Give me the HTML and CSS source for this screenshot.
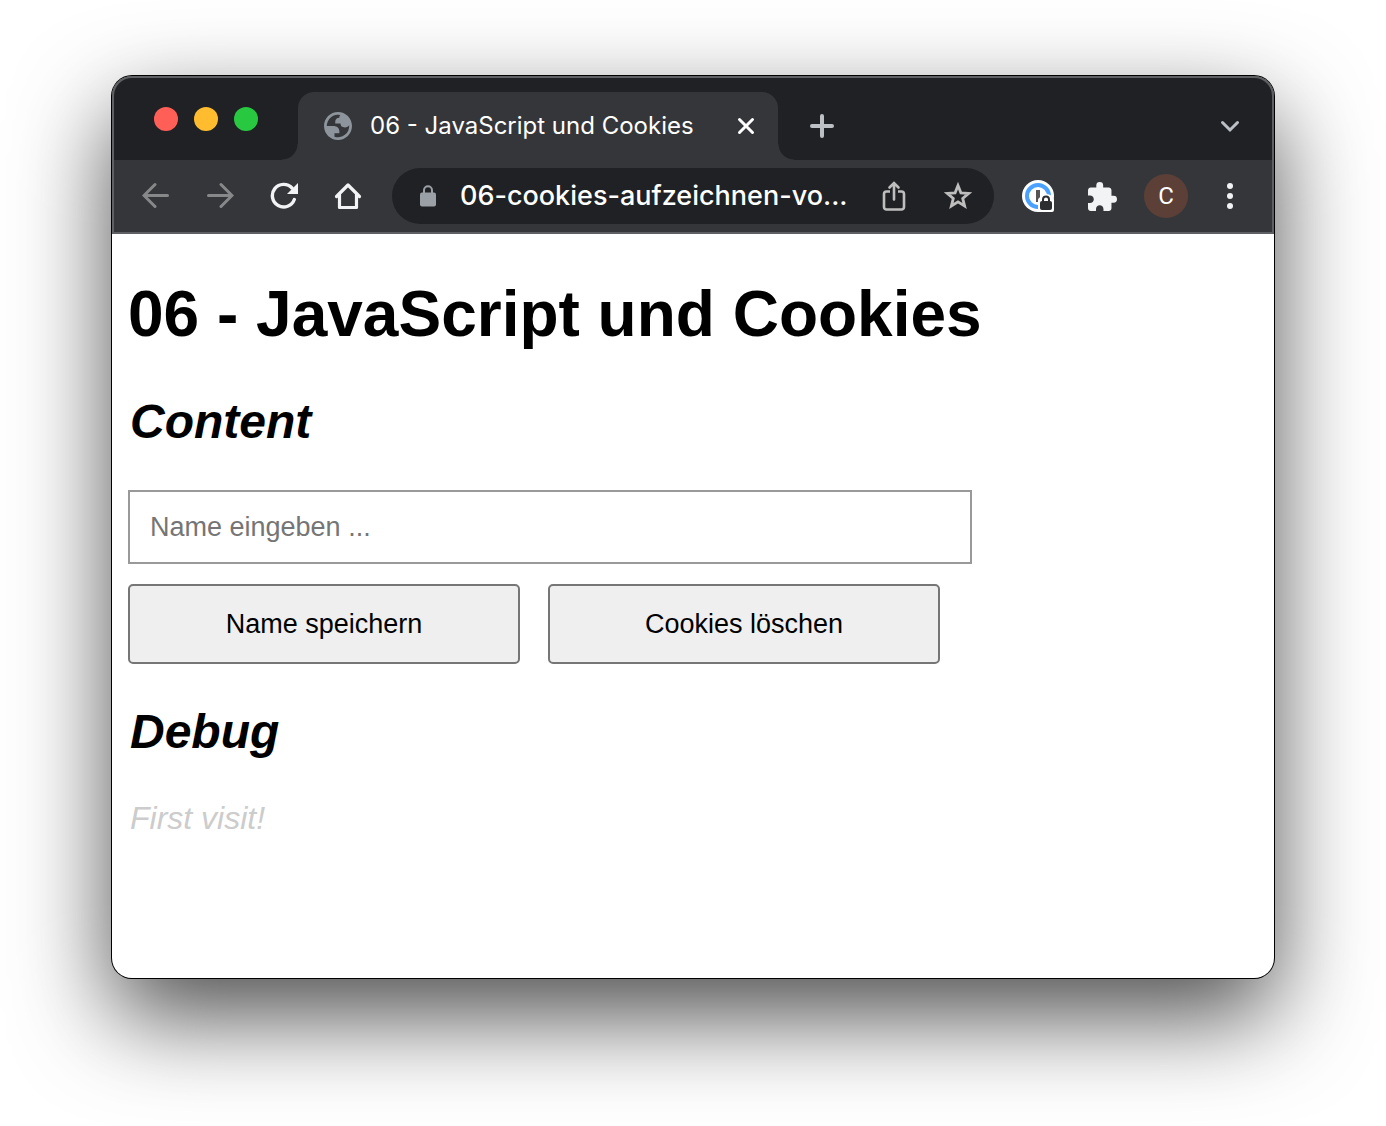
FILE: index.html
```html
<!DOCTYPE html>
<html lang="de">
<head>
<meta charset="utf-8">
<meta name="viewport" content="width=device-width, initial-scale=1">
<title>06 - JavaScript und Cookies</title>
<link rel="stylesheet" href="styles.css">
</head>
<body>
<div class="window">
  <header class="tabbar">
    <div class="lights">
      <button class="light light-close" aria-label="Schließen"></button>
      <button class="light light-min" aria-label="Minimieren"></button>
      <button class="light light-max" aria-label="Maximieren"></button>
    </div>
    <div class="tab">
      <svg class="favicon" viewBox="2 2 20 20" width="28" height="28" fill="#8d949b" fill-rule="evenodd" aria-hidden="true"><path d="M12 2C6.480 2 2 6.480 2 12s4.480 10 10 10 10-4.480 10-10S17.520 2 12 2zM4 12h4.400c3.407.022 4.922 1.730 4.543 5.127H9.488v2.470a8.004 8.004 0 0 0 10.498-8.083C19.327 12.504 18.332 13 17 13c-2.137 0-3.206-.916-3.206-2.750h-3.748c-.274-2.728.683-4.092 2.870-4.092 0-.975.327-1.597.811-1.970A8.004 8.004 0 0 0 4 12z"/></svg>
      <span class="tab-title">06 - JavaScript und Cookies</span>
      <button class="icon-btn tab-close" aria-label="Tab schließen"><svg viewBox="0 0 20 20" width="20" height="20" fill="none" stroke="#fff" stroke-width="3" stroke-linecap="round"><path d="M3.500 3.500l13 13M16.500 3.500l-13 13"/></svg></button>
    </div>
    <button class="icon-btn tool" aria-label="Neuer Tab"><svg viewBox="0 0 24 24" width="24" height="24" fill="none" stroke="#bdc1c6" stroke-width="4" stroke-linecap="round"><path d="M2 12h20M12 2v20"/></svg></button>
    <button class="icon-btn tool tab-search" aria-label="Tabs suchen"><svg viewBox="0 0 20 14" width="20" height="14" fill="none" stroke="#bdc1c6" stroke-width="3" stroke-linecap="round"><path d="M2.500 3.500l7.500 7.500 7.500-7.500"/></svg></button>
  </header>
  <nav class="toolbar" aria-label="Navigation">
    <button class="icon-btn tool" aria-label="Zurück"><svg viewBox="0 0 28 28" width="28" height="28" fill="none" stroke="#87888a" stroke-width="3" stroke-linecap="round"><path d="M25.500 13.500H3M13 2.500l-11 11 11 11"/></svg></button>
    <button class="icon-btn tool" aria-label="Vorwärts"><svg viewBox="0 0 28 28" width="28" height="28" fill="none" stroke="#87888a" stroke-width="3" stroke-linecap="round"><path d="M2.500 13.500H25M15 2.500l11 11-11 11"/></svg></button>
    <button class="icon-btn tool" aria-label="Neu laden"><svg viewBox="0 0 28 28" width="28" height="28"><path d="M24.300 17.500A11.300 11.300 0 1 1 22 6" fill="none" stroke="#f1f3f4" stroke-width="3.400" stroke-linecap="round"/><path d="M28 1v11H17z" fill="#f1f3f4"/></svg></button>
    <button class="icon-btn tool" aria-label="Startseite"><svg viewBox="0 0 28 28" width="28" height="28" fill="none" stroke="#f1f3f4" stroke-width="3.200" stroke-linejoin="round" stroke-linecap="round"><path d="M2.500 14.500L14 3l11.500 11.500M5.500 12.500v13h17v-13"/></svg></button>
    <div class="omnibox">
      <svg class="lock" viewBox="0 0 16 22" width="16" height="22" aria-hidden="true"><rect y="7.500" width="16" height="14" rx="2" fill="#9aa0a6"/><path d="M4 8V5.200a4 4 0 0 1 8 0V8" fill="none" stroke="#9aa0a6" stroke-width="2"/></svg>
      <input class="url" type="text" aria-label="Adresse" value="06-cookies-aufzeichnen-vo...">
      <button class="icon-btn tool" aria-label="Teilen"><svg viewBox="0 0 24 30" width="24" height="30" fill="none" stroke="#bebebe" stroke-width="2.600"><path d="M8 10.500H4.500a2.500 2.500 0 0 0-2.500 2.500v13A2.500 2.500 0 0 0 4.500 28.500h15a2.500 2.500 0 0 0 2.500-2.500V13a2.500 2.500 0 0 0-2.500-2.500H16"/><path d="M12 18.500V3M7.500 6.500L12 2l4.500 4.500" stroke-linecap="round"/></svg></button>
      <button class="icon-btn tool" aria-label="Lesezeichen"><svg viewBox="0 0 30 30" width="30" height="30" fill="none" stroke="#bebebe" stroke-width="2.800"><path d="M15 4.500l2.900 7.300 7.800.6-6 5 1.900 7.600-6.600-4.100L8.400 25l1.900-7.600-6-5 7.800-.6z"/></svg></button>
    </div>
    <button class="icon-btn tool" aria-label="Passwortmanager"><svg viewBox="0 0 32 32" width="32" height="32"><circle cx="16" cy="16" r="16" fill="#fff"/><circle cx="16" cy="16" r="11" fill="none" stroke="#4aa1ff" stroke-width="4"/><rect x="14" y="10" width="4" height="12" fill="#555"/><path d="M16 32V20c0-2 2-2 2-3 1-4 11-4 12 0 0 1 2 1 2 3v10a2 2 0 0 1-2 2z" fill="#fff"/><rect x="18" y="21" width="12" height="9" rx="2" fill="#2d2e30"/><path d="M21 22v-2.500a3 3 0 0 1 6 0V22" fill="none" stroke="#2d2e30" stroke-width="2"/></svg></button>
    <button class="icon-btn tool" aria-label="Erweiterungen"><svg viewBox="2 1 21 21" width="29" height="29" fill="#f1f3f4"><path d="M20.500 11H19V7c0-1.100-.9-2-2-2h-4V3.500a2.500 2.500 0 0 0-5 0V5H4c-1.100 0-1.990.9-1.990 2v3.800H3.500c1.490 0 2.700 1.210 2.700 2.700s-1.210 2.700-2.700 2.700H2V20c0 1.100.9 2 2 2h3.800v-1.500c0-1.490 1.210-2.700 2.700-2.700s2.700 1.210 2.700 2.700V22H17c1.100 0 2-.9 2-2v-4h1.500a2.500 2.500 0 0 0 0-5z"/></svg></button>
    <button class="icon-btn tool" aria-label="Profil"><span class="avatar">C</span></button>
    <button class="icon-btn tool" aria-label="Menü"><svg viewBox="0 0 6 26" width="6" height="26" fill="#f1f3f4"><circle cx="3" cy="3" r="3"/><circle cx="3" cy="13" r="3"/><circle cx="3" cy="23" r="3"/></svg></button>
  </nav>
  <main class="page">
    <h1>06 - JavaScript und Cookies</h1>
    <h2>Content</h2>
    <form class="form">
      <input class="name" type="text" aria-label="Name" placeholder="Name eingeben ...">
      <div class="actions">
        <button class="action" type="button">Name speichern</button>
        <button class="action" type="button">Cookies löschen</button>
      </div>
    </form>
    <h2>Debug</h2>
    <p class="visit">First visit!</p>
  </main>
</div>
</body>
</html>
```
FILE: styles.css
```css
*,
*::before,
*::after {
  box-sizing: border-box;
}

body {
  display: flex;
  flex-direction: column;
  min-height: 100vh;
  margin: 0;
  padding: 76px 112px 148px;
  overflow-x: hidden;
  background: #fff;
  font-family: "Liberation Sans", Arial, sans-serif;
}

button {
  font: inherit;
}

.window {
  position: relative;
  display: flex;
  flex: 1;
  flex-direction: column;
  border-radius: 20px;
  background: #fff;
  box-shadow: 0 0 0 1px #000, 0 38px 96px rgba(0, 0, 0, 0.7);
}

/* light rim along the top of the dark frame */
.window::after {
  content: "";
  position: absolute;
  inset: 0 0 auto;
  height: 158px;
  border: 2px solid #5f6063;
  border-bottom: 0;
  border-radius: 20px 20px 0 0;
  pointer-events: none;
}

.tabbar {
  display: flex;
  align-items: flex-end;
  height: 84px;
  border-radius: 20px 20px 0 0;
  background: #202124;
}

.lights {
  display: flex;
  gap: 16px;
  padding: 0 40px 29px 42px;
}

.light {
  width: 24px;
  height: 24px;
  padding: 0;
  border: 0;
  border-radius: 50%;
}

.light-close {
  background: #ff5f57;
}

.light-min {
  background: #febc2e;
}

.light-max {
  background: #28c840;
}

.tab {
  position: relative;
  display: flex;
  align-items: center;
  flex: 0 1 480px;
  height: 68px;
  padding: 0 16px 0 26px;
  border-radius: 16px 16px 0 0;
  background: #35363a;
  color: #fff;
}

.tab::before,
.tab::after {
  content: "";
  position: absolute;
  bottom: 0;
  width: 16px;
  height: 16px;
}

.tab::before {
  right: 100%;
  background: radial-gradient(circle at 0 0, #202124 15px, #35363a 16px);
}

.tab::after {
  left: 100%;
  background: radial-gradient(circle at 100% 0, #202124 15px, #35363a 16px);
}

.tab-title {
  flex: 1;
  margin-left: 18px;
  font-family: Inter, sans-serif;
  font-size: 24px;
  line-height: 32px;
  white-space: nowrap;
}

.icon-btn {
  display: flex;
  align-items: center;
  justify-content: center;
  flex: none;
  padding: 0;
  border: 0;
  background: none;
}

.tab-close {
  width: 32px;
  height: 32px;
}

.tool {
  width: 64px;
  height: 56px;
}

.tabbar .tool {
  width: 88px;
  height: 68px;
}

.tabbar .tab-search {
  margin-left: auto;
}

.toolbar {
  display: flex;
  align-items: center;
  height: 74px;
  padding: 0 12px;
  border-bottom: 2px solid #5f6063;
  background: #35363a;
}

.omnibox {
  display: flex;
  align-items: center;
  flex: 1;
  min-width: 0;
  height: 56px;
  margin: 0 12px;
  padding: 0 4px 0 28px;
  border-radius: 28px;
  background: #202124;
}

.lock {
  flex: none;
}

.url {
  flex: 1;
  min-width: 0;
  margin-left: 24px;
  padding: 0;
  border: 0;
  background: none;
  color: #fff;
  font-family: Inter, sans-serif;
  font-size: 27px;
  font-weight: 500;
  line-height: 36px;
}

.avatar {
  width: 44px;
  border-radius: 50%;
  background: #5c4037;
  color: #fff;
  font-family: Roboto, sans-serif;
  font-size: 24px;
  line-height: 44px;
  text-align: center;
}

.page {
  padding: 0 16px 40px;
  color: #000;
}

h1 {
  margin: 42px 0;
  font-size: 64px;
  line-height: 76px;
}

h2 {
  margin: 40px 0;
  font-size: 48px;
  line-height: 56px;
}

h2,
.visit {
  padding-left: 2px;
  font-style: italic;
}

.form {
  display: flex;
  flex-direction: column;
  gap: 20px;
}

.name {
  width: 100%;
  max-width: 844px;
  height: 74px;
  padding: 0 20px;
  border: 2px solid #999;
  color: #000;
  font-family: inherit;
  font-size: 27px;
}

.name::placeholder {
  color: #757575;
}

.actions {
  display: flex;
  gap: 28px;
}

.action {
  flex: 0 1 392px;
  height: 80px;
  border: 2px solid #767676;
  border-radius: 5px;
  background: #efefef;
  color: #000;
  font-size: 27px;
}

.visit {
  margin: 0;
  color: #ccc;
  font-size: 32px;
  line-height: 36px;
}
```
